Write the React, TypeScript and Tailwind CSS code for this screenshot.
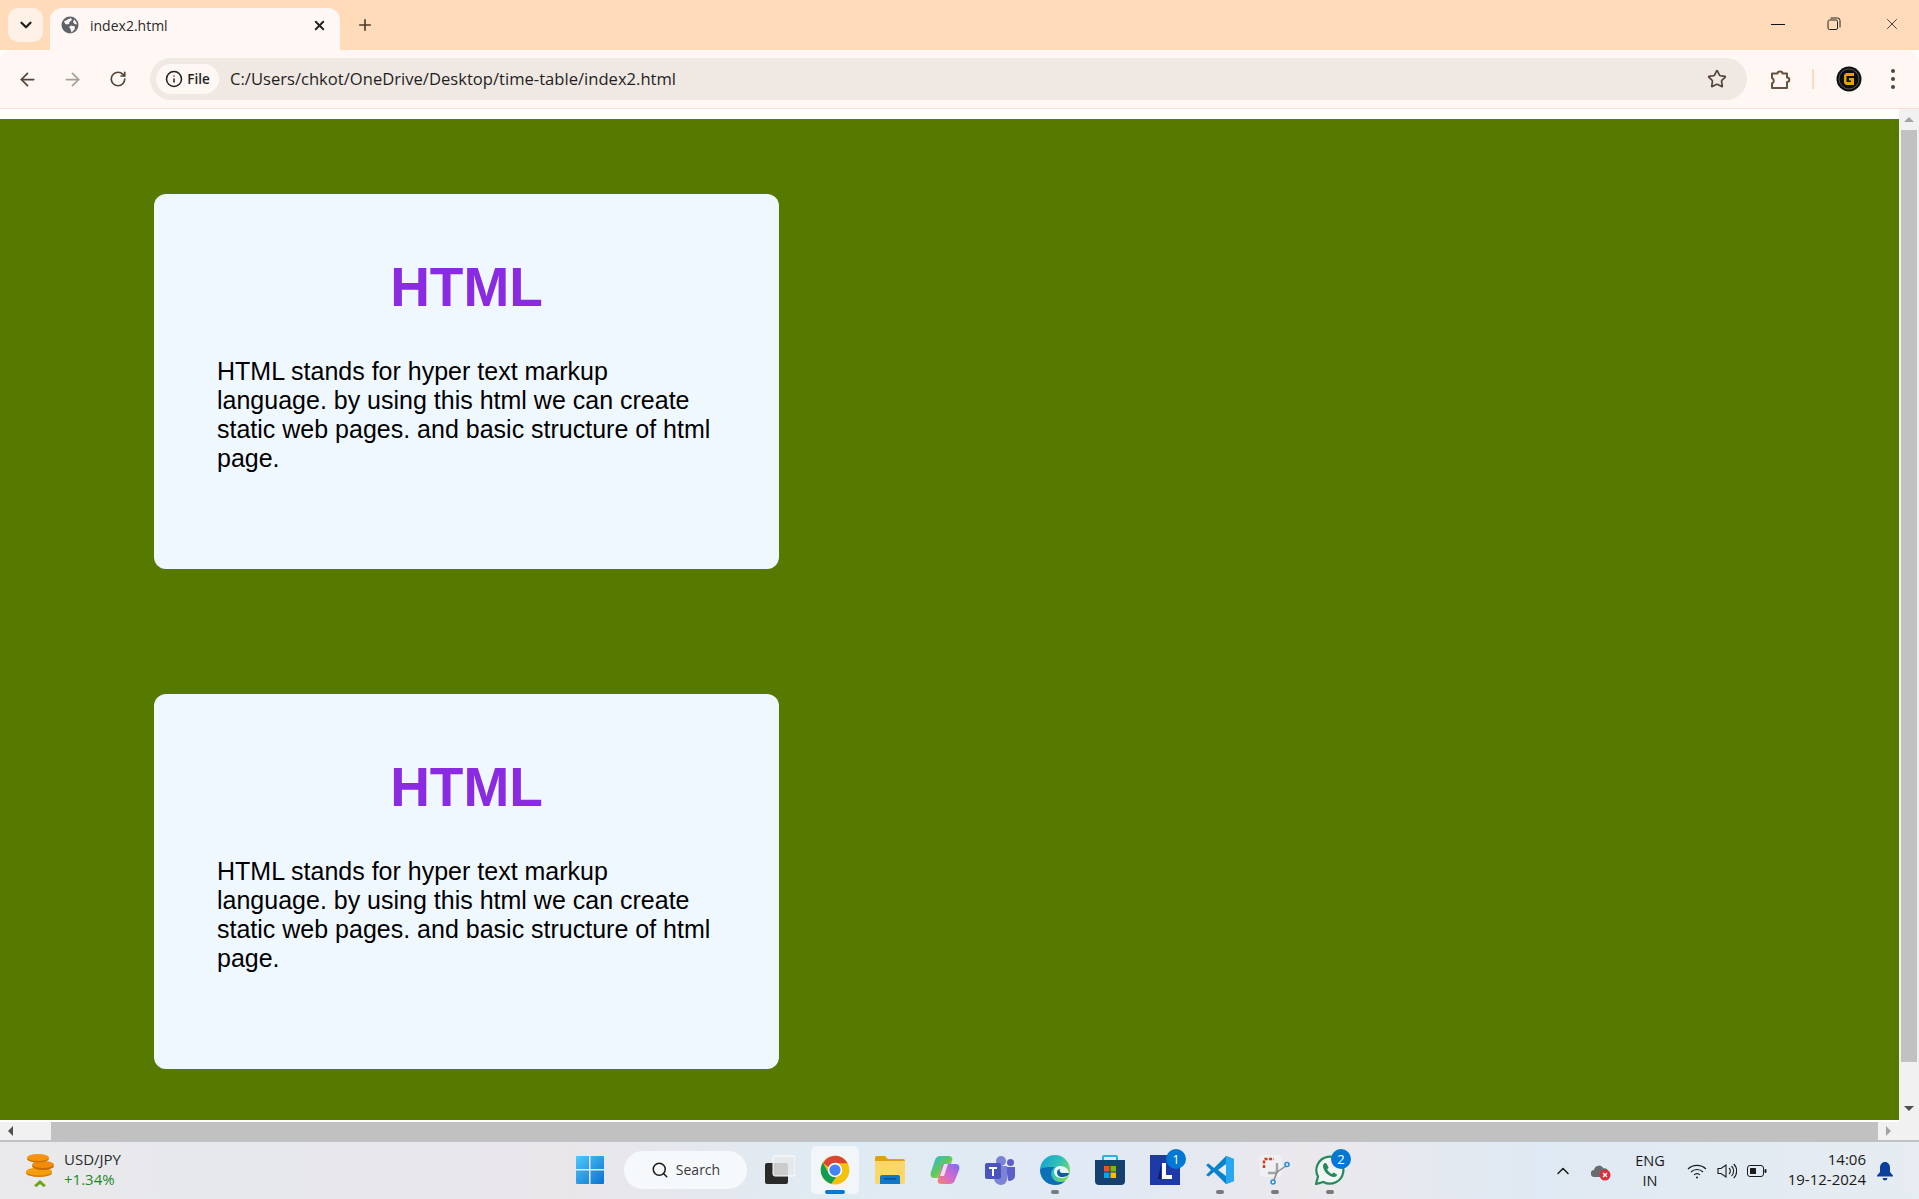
import React from "react";
import { ArrowLeft, ArrowRight, RotateCw, Star, X, Plus, ChevronDown, ChevronUp, Search, Info } from "lucide-react";

const ui = "font-['Open_Sans','Noto_Sans',sans-serif]";

function Card() {
  return (
    <section className="w-[625px] h-[375px] rounded-xl bg-[#f0f8ff] p-[63px] font-['Liberation_Sans',Arial,sans-serif]">
      <h1 className="-mt-[1px] text-center text-[55px] leading-[62px] font-bold text-[#8a2be2]">HTML</h1>
      <p className="mt-[39px] text-[25px] leading-[29px] text-black">
        HTML stands for hyper text markup language. by using this html we can create static web pages. and basic structure of html page.
      </p>
    </section>
  );
}

function Globe() {
  return (
    <svg width="18" height="18" viewBox="0 0 18 18">
      <circle cx="9" cy="9" r="8.500" fill="#5f6368" />
      <path d="M3 5.500 6.500 3.500 10 2 11 4 8.500 6 8 8 5.500 8.500 4 7.500ZM10 9.500l4 1-.5 3-3 3-1-3.500-1.500-2ZM13 3.500l2 2 1 3-2.500-.5-1.500-2Z" fill="#fff7f3" />
    </svg>
  );
}

function RestoreIcon() {
  return (
    <svg width="14" height="14" viewBox="0 0 14 14" fill="none" stroke="#222" strokeWidth="1">
      <rect x="1" y="3" width="9.500" height="9.500" rx="1.500" />
      <path d="M3.500 1h7a2.500 2.500 0 0 1 2.500 2.500v7" />
    </svg>
  );
}

function PuzzleIcon() {
  return (
    <svg width="22" height="22" viewBox="0 0 22 22" fill="none" stroke="#67533f" strokeWidth="2" strokeLinejoin="round">
      <path d="M2 5.500h5.500a2.500 2 0 0 1 5 0H17V9.500a2.200 2.200 0 0 1 0 4.500v6H2v-4.500a3 3 0 0 0 0-5.500Z" />
    </svg>
  );
}

function Profile() {
  return (
    <svg width="26" height="26" viewBox="0 0 26 26">
      <circle cx="13" cy="13" r="12.500" fill="#0d0d0d" />
      <circle cx="13" cy="13" r="10" fill="none" stroke="#555" strokeWidth="1" />
      <path d="M18 7H10L8 9v8l2 2h8v-7h-5v2.500h2V16h-4.500V10H18Z" fill="#e6a013" />
    </svg>
  );
}

function Coins() {
  return (
    <svg width="30" height="34" viewBox="0 0 30 34">
      <ellipse cx="13" cy="19" rx="13" ry="4" fill="#d97706" />
      <ellipse cx="13" cy="17.500" rx="13" ry="4" fill="#f59e0b" />
      <ellipse cx="17" cy="12" rx="11" ry="4" fill="#c96a04" />
      <ellipse cx="17" cy="10.500" rx="11" ry="3.500" fill="#f08c0a" />
      <ellipse cx="12" cy="5" rx="11" ry="3.500" fill="#cf7105" />
      <ellipse cx="12" cy="3.500" rx="11" ry="3.500" fill="#f7930f" />
      <path d="M8 31.500 14 26l6 5.500-2.500 1.500L14 30l-3.500 3Z" fill="#6aa31e" />
    </svg>
  );
}

function WinLogo() {
  return (
    <svg width="30" height="30" viewBox="0 0 30 30">
      <defs>
        <linearGradient id="w" x1="0" y1="0" x2="1" y2="1">
          <stop offset="0" stopColor="#4fc8fa" />
          <stop offset="1" stopColor="#0a72d0" />
        </linearGradient>
      </defs>
      <path d="M1 2a1 1 0 0 1 1-1h12v13H1ZM15.500 1H28a1 1 0 0 1 1 1v12H15.500ZM1 15.500h13V29H2a1 1 0 0 1-1-1ZM15.500 15.500H29V28a1 1 0 0 1-1 1H15.500Z" fill="url(#w)" />
    </svg>
  );
}

function TaskView() {
  return (
    <svg width="30" height="30" viewBox="0 0 30 30">
      <rect x="0" y="8" width="23" height="21" rx="2" fill="#2a2a2a" />
      <rect x="8" y="1" width="22" height="20" rx="2" fill="#e8e8e8" fillOpacity="0.85" stroke="#fff" />
    </svg>
  );
}

function ChromeIcon() {
  return (
    <svg width="30" height="30" viewBox="0 0 48 48">
      <circle cx="24" cy="24" r="23" fill="#f4c20d" />
      <path d="M24 1A23 23 0 0 1 44 13H24A11 11 0 0 0 14 19L5 13A23 23 0 0 1 24 1Z" fill="#db4437" />
      <path d="M4.500 12 14 29a11 11 0 0 0 12 6L18 46A23 23 0 0 1 4.500 12Z" fill="#0f9d58" />
      <circle cx="24" cy="24" r="11.500" fill="#fff" />
      <circle cx="24" cy="24" r="9" fill="#4285f4" />
    </svg>
  );
}

function FolderIcon() {
  return (
    <svg width="30" height="28" viewBox="0 0 30 28">
      <path d="M0 2a2 2 0 0 1 2-2h8l3 3h15a2 2 0 0 1 2 2v4H0Z" fill="#dfa20e" />
      <path d="M0 5h30v21a2 2 0 0 1-2 2H2a2 2 0 0 1-2-2Z" fill="#fcd768" />
      <path d="M5 28v-7a2 2 0 0 1 2-2h16a2 2 0 0 1 2 2v7Z" fill="#0f78c9" />
      <rect x="9" y="22" width="12" height="1.500" fill="#0a4f8c" />
    </svg>
  );
}

function CopilotIcon() {
  return (
    <svg width="30" height="30" viewBox="0 0 30 30">
      <defs>
        <linearGradient id="c1" x1="0" y1="0" x2="1" y2="1">
          <stop offset="0" stopColor="#2bb7e8" />
          <stop offset="0.5" stopColor="#5fc85b" />
          <stop offset="1" stopColor="#f5d33f" />
        </linearGradient>
        <linearGradient id="c2" x1="1" y1="0" x2="0" y2="1">
          <stop offset="0" stopColor="#7b6cf0" />
          <stop offset="0.55" stopColor="#d46ad0" />
          <stop offset="1" stopColor="#f8866a" />
        </linearGradient>
      </defs>
      <path d="M10 1h9c2 0 3 1 3.500 3L18 20c-.5 2-2 3-4 3H4c-3 0-4-3-3-6L5 5c1-3 3-4 5-4Z" fill="url(#c1)" />
      <path d="M14 9h12c3 0 4 3 3 6l-4 10c-1 3-3 4-5 4h-9c-2 0-3-1-3.500-3L12 12c.5-2 .5-3 2-3Z" fill="url(#c2)" />
      <path d="M14 9h4l-4 12h-4Z" fill="#fff" fillOpacity="0.75" />
    </svg>
  );
}

function TeamsIcon() {
  return (
    <svg width="30" height="30" viewBox="0 0 30 30">
      <circle cx="16" cy="6" r="5" fill="#7b83d6" />
      <circle cx="25.500" cy="7.500" r="3.500" fill="#5b5fc7" />
      <path d="M21 12h9v9a5 5 0 0 1-7 4.500Z" fill="#5b5fc7" />
      <path d="M9 11h13v13a6 6 0 0 1-6 6 7 7 0 0 1-7-7Z" fill="#7b83d6" />
      <rect x="0" y="8" width="16" height="16" rx="2" fill="#4b53bc" />
      <path d="M4 12h8v2H9v7H7v-7H4Z" fill="#fff" />
    </svg>
  );
}

function EdgeIcon() {
  return (
    <svg width="30" height="30" viewBox="0 0 30 30">
      <defs>
        <linearGradient id="e1" x1="0" y1="0" x2="1" y2="0.600">
          <stop offset="0" stopColor="#0f9fd8" />
          <stop offset="0.6" stopColor="#35c1b5" />
          <stop offset="1" stopColor="#7ddc5a" />
        </linearGradient>
      </defs>
      <circle cx="15" cy="15" r="15" fill="url(#e1)" />
      <path d="M0 15c1 12 10 15 15 15 4 0 7-1 10-4-5 2-11 1-13-4-2-4 0-8 3-10C8 12 1 12 0 15Z" fill="#0c70b8" />
      <path d="M29 19c0-5-4-8-9-8-3 0-6 2-6 6 0 3 3 6 7 6 5 0 8-2 8-4Z" fill="#e8f3fa" />
      <path d="M29 18c0 3-4 4-7 4-3 0-5-2-5-5 0-2 2-3 3-3-1 2 0 4 3 4 2 0 4 0 6 0Z" fill="#0c5e9c" />
    </svg>
  );
}

function StoreIcon() {
  return (
    <svg width="30" height="30" viewBox="0 0 30 30">
      <path d="M8 6V2a1 1 0 0 1 1-1h12a1 1 0 0 1 1 1v4" fill="none" stroke="#28b0e8" strokeWidth="2" />
      <path d="M0 5h30v21a4 4 0 0 1-4 4H4a4 4 0 0 1-4-4Z" fill="#16406f" />
      <rect x="9" y="11" width="5.500" height="5.500" fill="#f25022" />
      <rect x="15.500" y="11" width="5.500" height="5.500" fill="#7fba00" />
      <rect x="9" y="17.500" width="5.500" height="5.500" fill="#00a4ef" />
      <rect x="15.500" y="17.500" width="5.500" height="5.500" fill="#ffb900" />
    </svg>
  );
}

function Badge({ n }: { n: number }) {
  return (
    <span className={`absolute -top-[6px] -right-[6px] w-5 h-5 rounded-full bg-[#0078d4] text-white text-[13px] leading-5 text-center ${ui}`}>{n}</span>
  );
}

function LIcon() {
  return (
    <div className="relative w-[30px] h-[30px]">
      <svg width="30" height="30" viewBox="0 0 30 30">
        <rect width="30" height="30" fill="#1e3aa8" />
        <path d="M8 24 11 9v15Z" fill="#0c1d5e" />
        <path d="M12 8h4v12h6v4H12Z" fill="#fff" />
      </svg>
      <Badge n={1} />
    </div>
  );
}

function VSCodeIcon() {
  return (
    <svg width="30" height="30" viewBox="0 0 30 30">
      <path d="M21 1 9 13 3.500 8.500 1 10l5 5-5 5 2.500 1.500L9 17l12 12 8-3V4Z" fill="#0a82cc" />
      <path d="M21 1l8 3v22l-8 3Z" fill="#28a8f0" />
      <path d="M21 9v12l-8-6Z" fill="#e5edf5" />
    </svg>
  );
}

function SnipIcon() {
  return (
    <svg width="30" height="30" viewBox="0 0 30 30">
      <rect x="0" y="0" width="22" height="22" rx="3" fill="#eef0f2" />
      <path d="M4 13V5a1 1 0 0 1 1-1h9" fill="none" stroke="#d43b1f" strokeWidth="2.500" strokeDasharray="3 1.500" />
      <path d="M8 18h7a2 2 0 0 0 2-2V8" fill="none" stroke="#a4a4a8" strokeWidth="2.500" />
      <path d="M17 17 26 11M17 17l-3 8" stroke="#8a8a8e" strokeWidth="1.500" />
      <circle cx="27" cy="9.500" r="2" fill="#eaf2f8" stroke="#2a8fd8" strokeWidth="1.600" />
      <circle cx="13" cy="27" r="2" fill="#eaf2f8" stroke="#2a8fd8" strokeWidth="1.600" />
    </svg>
  );
}

function WhatsAppIcon() {
  return (
    <div className="relative w-[30px] h-[30px]">
      <svg width="30" height="30" viewBox="0 0 30 30">
        <path d="M1 29l2-7.500A13.500 13.500 0 1 1 8.500 27Z" fill="#f0f6f4" stroke="#25895c" strokeWidth="2.200" />
        <path d="M10 8c-1 0-2 1.500-2 3 0 5 6 11 11 11 2 0 3-1 3-2.500l-3.500-2-1.500 1.500c-2-.8-4-2.800-4.800-4.800l1.500-1.500L11.500 8.500Z" fill="#25895c" />
      </svg>
      <Badge n={2} />
    </div>
  );
}

function Tray() {
  return (
    <>
      <ChevronUp size={20} strokeWidth={1.800} className="text-[#1a1a1a]" />
      <div className="relative w-5 h-5 ml-[18px]">
        <svg width="20" height="20" viewBox="0 0 20 20">
          <path d="M3.500 16a3.500 3.500 0 0 1-.5-7 5 5 0 0 1 9.500-1.500 4 4 0 0 1 5 4.500v4Z" fill="#6b6b6f" />
          <circle cx="14" cy="14" r="5.500" fill="#dc2f3c" />
          <path d="M12 12l4 4m0-4-4 4" stroke="#fff" strokeWidth="1.300" />
        </svg>
      </div>
      <div className="w-[60px] ml-[9px] text-center text-[14.500px] leading-[20px] text-[#1a1a1a]">
        <div>ENG</div>
        <div>IN</div>
      </div>
      <svg width="20" height="20" viewBox="0 0 20 20" fill="none" stroke="#1a1a1a" strokeWidth="1.100" className="ml-[7px]">
        <path d="M1 8a13 13 0 0 1 18 0M4 11a8.500 8.500 0 0 1 12 0M7 14a4 4 0 0 1 6 0" />
        <circle cx="10" cy="16.500" r="1" fill="#1a1a1a" stroke="none" />
      </svg>
      <svg width="20" height="20" viewBox="0 0 20 20" fill="none" stroke="#1a1a1a" strokeWidth="1.100" className="ml-[10px]">
        <path d="M1 7.500h3L9 4v12l-5-3.500H1Z" />
        <path d="M12 7a4 4 0 0 1 0 6M14.500 5a7 7 0 0 1 0 10M16.800 3a10 10 0 0 1 0 14" />
      </svg>
      <svg width="20" height="20" viewBox="0 0 20 20" fill="none" className="ml-[10px]">
        <rect x="0.500" y="4.500" width="16" height="11" rx="2.500" stroke="#1a1a1a" />
        <rect x="3" y="7" width="6" height="6" rx="0.500" fill="#1a1a1a" />
        <rect x="17.500" y="8" width="2" height="4" rx="1" fill="#1a1a1a" />
      </svg>
      <div className="w-[90px] ml-[9px] text-right text-[15px] leading-[20px] text-[#1a1a1a] -mt-[4px]">
        <div>14:06</div>
        <div>19-12-2024</div>
      </div>
      <svg width="18" height="20" viewBox="0 0 18 20" className="ml-[10px]">
        <path d="M9 1c-3 0-5 2.500-5 5.500V11l-3 3.500v1h16v-1L14 11V6.500C14 3.500 12 1 9 1Z" fill="#0b3f9e" />
        <path d="M6.500 17h5a2.500 2.500 0 0 1-5 0Z" fill="#0b3f9e" />
      </svg>
    </>
  );
}

function Dot() {
  return <span className="absolute left-1/2 -translate-x-1/2 bottom-[-9px] w-[8px] h-[4px] rounded-full bg-[#7a7a7a]" />;
}

function AppSlot({ children, dot }: { children: React.ReactNode; dot?: boolean }) {
  return (
    <div className="relative w-[30px] h-[30px] flex items-center justify-center">
      {children}
      {dot && <Dot />}
    </div>
  );
}

export default function App() {
  return (
    <div className={`w-[1919px] h-[1199px] flex flex-col overflow-hidden bg-white ${ui}`}>
      {/* Tab strip */}
      <header className="h-[50px] shrink-0 bg-[#ffdbb9] flex items-start">
        <button className="ml-[8px] mt-[8px] w-[35px] h-[34px] rounded-[10px] bg-[#fff1e6] flex items-center justify-center">
          <ChevronDown size={18} strokeWidth={3} className="text-[#1f1f1f]" />
        </button>
        <div className="ml-[7px] mt-[8px] w-[290px] h-[42px] rounded-t-[12px] bg-[#fff7f3] flex items-center pl-[11px] pr-[13px] pb-[8px]">
          <Globe />
          <span className="ml-[11px] text-[14px] text-[#2a2a2a] flex-1">index2.html</span>
          <X size={15} strokeWidth={3} className="text-[#222]" />
        </div>
        <Plus size={18} strokeWidth={2.200} className="ml-[16px] mt-[16px] text-[#4d3b2a]" />
        <div className="flex-1" />
        <div className="flex items-center h-[50px] pb-[2px] text-[#222]">
          <div className="w-[14px] h-[1px] bg-[#111] mr-[42px]" />
          <RestoreIcon />
          <X size={18} strokeWidth={1.100} className="ml-[42px] mr-[18px]" />
        </div>
      </header>

      {/* Toolbar */}
      <nav className="h-[59px] shrink-0 bg-[#fff7f3] border-b border-[#f3e1d3] rounded-t-[10px] flex items-center">
        <ArrowLeft size={21} strokeWidth={2} className="ml-[17px] text-[#54433a]" />
        <ArrowRight size={21} strokeWidth={2} className="ml-[24px] text-[#a89f99]" />
        <RotateCw size={18} strokeWidth={2.200} className="ml-[26px] text-[#54433a]" />
        <div className="ml-[23px] w-[1597px] h-[42px] rounded-full bg-[#f0e8e3] flex items-center pl-[6px] pr-[20px]">
          <div className="h-[30px] w-[63px] rounded-full bg-[#fff7f3] flex items-center justify-center gap-[4px]">
            <Info size={18} strokeWidth={2} className="text-[#1f1f1f]" />
            <span className="text-[13.500px] font-semibold text-[#1f1f1f]">File</span>
          </div>
          <span className="ml-[11px] text-[16.600px] text-[#1f1f1f] flex-1 mt-[1px]">C:/Users/chkot/OneDrive/Desktop/time-table/index2.html</span>
          <Star size={20} strokeWidth={2} className="text-[#54433a]" />
        </div>
        <div className="ml-[23px]"><PuzzleIcon /></div>
        <div className="ml-[20px] w-[2px] h-[20px] bg-[#ffdbb9]" />
        <div className="ml-[22px]"><Profile /></div>
        <div className="ml-[29px] flex flex-col gap-[4px]">
          <span className="w-[4px] h-[4px] rounded-full bg-[#54433a]" />
          <span className="w-[4px] h-[4px] rounded-full bg-[#54433a]" />
          <span className="w-[4px] h-[4px] rounded-full bg-[#54433a]" />
        </div>
      </nav>

      {/* Page + vertical scrollbar */}
      <div className="h-[1013px] shrink-0 flex">
        <div className="flex-1 flex flex-col">
          <div className="h-[10px] bg-white shrink-0" />
          <main className="h-[1001px] shrink-0 bg-[#567a00] pl-[154px] pt-[75px] flex flex-col gap-[125px] overflow-hidden">
            <Card />
            <Card />
          </main>
          <div className="h-[2px] bg-white shrink-0" />
        </div>
        <aside className="w-[20px] bg-[#f1f1f1] flex flex-col items-center">
          <div className="h-[21px] flex items-center justify-center">
            <div className="w-0 h-0 border-x-[5px] border-x-transparent border-b-[5px] border-b-[#a3a3a3]" />
          </div>
          <div className="w-[16px] h-[932px] bg-[#c1c1c1]" />
          <div className="flex-1" />
          <div className="h-[28px] flex items-center justify-center">
            <div className="w-0 h-0 border-x-[5px] border-x-transparent border-t-[5px] border-t-[#505050]" />
          </div>
        </aside>
      </div>

      {/* Horizontal scrollbar */}
      <div className="h-[18px] shrink-0 bg-[#f1f1f1] flex items-center">
        <div className="w-[20px] flex justify-center">
          <div className="w-0 h-0 border-y-[5px] border-y-transparent border-r-[5px] border-r-[#505050]" />
        </div>
        <div className="ml-[31px] w-[1827px] h-[18px] bg-[#c1c1c1]" />
        <div className="w-[21px] flex justify-center">
          <div className="w-0 h-0 border-y-[5px] border-y-transparent border-l-[5px] border-l-[#a3a3a3]" />
        </div>
      </div>

      {/* Taskbar */}
      <footer className="flex-1 border-t-2 border-[#bfc2c5] flex items-center bg-[linear-gradient(90deg,#eaeaec_0%,#e6e7ec_14%,#e9e6ea_30%,#dfebf3_44%,#e1e9f4_58%,#ebe8ec_68%,#dfe9f3_80%,#e6ecf1_100%)]">
        <div className="ml-[26px] w-[30px]"><Coins /></div>
        <div className="ml-[8px] w-[100px] text-[15px] leading-[20px] -mt-[4px]">
          <div className="text-[#2a2a2a]">USD/JPY</div>
          <div className="text-[#1f8a1f]">+1.34%</div>
        </div>
        <div className="ml-[411px] -mt-[2px]"><WinLogo /></div>
        <div className="ml-[19px] w-[123px] h-[38px] rounded-full bg-[#f6f9fb] flex items-center justify-center gap-[7px] -mt-[2px]">
          <Search size={18} strokeWidth={2} className="text-[#1a1a1a]" />
          <span className="text-[14px] text-[#3a3a3a]">Search</span>
        </div>
        <div className="ml-[18px] -mt-[2px]"><TaskView /></div>
        <div className="relative ml-[16px] w-[48px] h-[48px] rounded-[5px] bg-[#f2f6fa] flex items-center justify-center -mt-[2px]">
          <ChromeIcon />
          <span className="absolute left-1/2 -translate-x-1/2 bottom-0 w-[20px] h-[4px] rounded-full bg-[#0078d4]" />
        </div>
        <div className="ml-[16px] flex items-center gap-[25px] -mt-[2px]">
          <AppSlot><FolderIcon /></AppSlot>
          <AppSlot><CopilotIcon /></AppSlot>
          <AppSlot><TeamsIcon /></AppSlot>
          <AppSlot dot><EdgeIcon /></AppSlot>
          <AppSlot><StoreIcon /></AppSlot>
          <AppSlot><LIcon /></AppSlot>
          <AppSlot dot><VSCodeIcon /></AppSlot>
          <AppSlot dot><SnipIcon /></AppSlot>
          <AppSlot dot><WhatsAppIcon /></AppSlot>
        </div>
        <div className="ml-[208px] flex items-center">
          <Tray />
        </div>
      </footer>
    </div>
  );
}
